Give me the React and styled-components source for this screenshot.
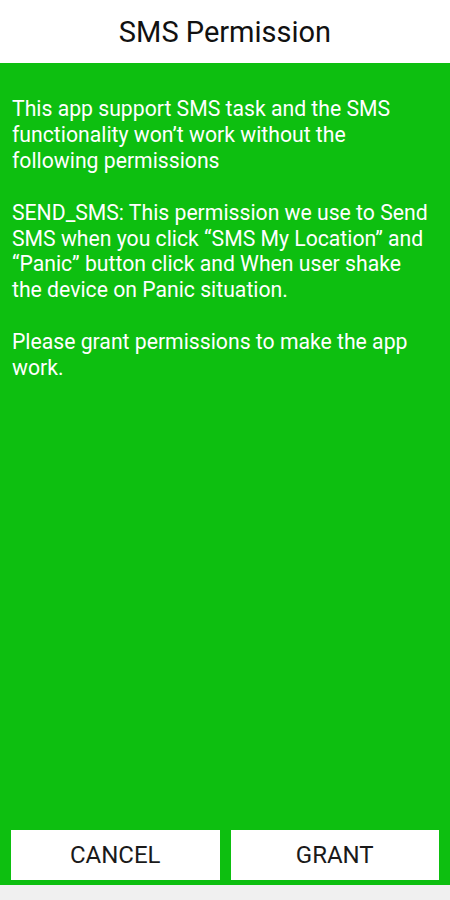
import styled, { createGlobalStyle } from 'styled-components';

const Global = createGlobalStyle`
  html, body { margin: 0; padding: 0; }
  body { font-family: Roboto, "Noto Sans", sans-serif; background: #f0f0f0; }
`;

const Screen = styled.div`
  display: flex;
  flex-direction: column;
  height: 900px;
`;
const Header = styled.header`
  height: 63px;
  background: #fff;
  display: flex;
  align-items: center;
  justify-content: center;
  font-size: 29px;
  color: #111;
`;
const Body = styled.main`
  flex: 1;
  background: #0dbf10;
  display: flex;
  flex-direction: column;
  padding: 33px 11px 5px 11px;
`;
const Text = styled.div`
  flex: 1;
  color: #fff;
  font-size: 21.2px;
  line-height: 25.9px;
  padding: 0 7px 0 1px;
  p { margin: 0 0 25.9px; }
`;
const Buttons = styled.div`
  display: grid;
  grid-template-columns: 1fr 1fr;
  gap: 11px;
`;
const Button = styled.button`
  height: 50px;
  border: none;
  background: #fff;
  font-family: Roboto, sans-serif;
  font-size: 24px;
  color: #1a1a1a;
`;
const Footer = styled.div`
  height: 15px;
  background: #f0f0f0;
`;

export default function App() {
  return (
    <Screen>
      <Global />
      <Header>SMS Permission</Header>
      <Body>
        <Text>
          <p>This app support SMS task and the SMS functionality won’t work without the following permissions</p>
          <p>SEND_SMS: This permission we use to Send SMS when you click “SMS My Location” and “Panic” button click and When user shake the device on Panic situation.</p>
          <p>Please grant permissions to make the app work.</p>
        </Text>
        <Buttons>
          <Button>CANCEL</Button>
          <Button>GRANT</Button>
        </Buttons>
      </Body>
      <Footer />
    </Screen>
  );
}
